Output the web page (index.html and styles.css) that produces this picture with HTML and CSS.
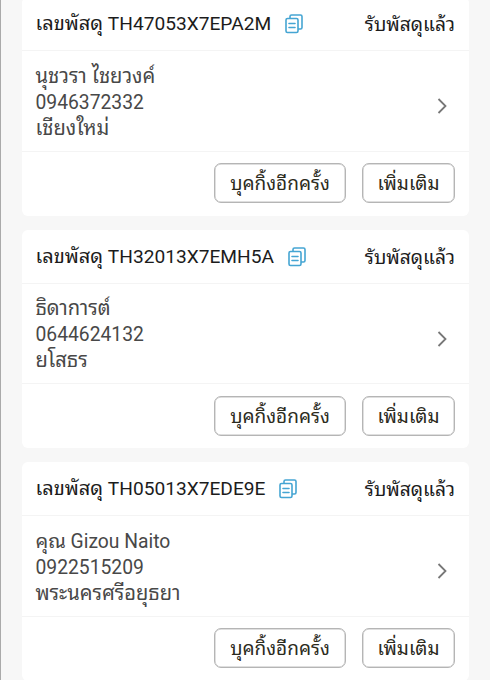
FILE: index.html
```html
<!DOCTYPE html>
<html lang="th"><head><meta charset="utf-8"><title>พัสดุ</title><link rel="stylesheet" href="styles.css"></head>
<body>
<svg class="defs" aria-hidden="true"><symbol id="copy" viewBox="0 0 18 20"><path d="M5 4.200V2.500Q5 1 6.500 1H15.500Q17 1 17 2.500V13.500Q17 15 15.500 15H13.200M2.500 4.500H11.500Q13 4.500 13 6V17Q13 18.500 11.500 18.500H2.500Q1 18.500 1 17V6Q1 4.500 2.500 4.500ZM4 9.500H10M4 13.500H10"/></symbol><symbol id="chev" viewBox="0 0 10 16"><path d="M1.500 1 8.500 8 1.500 15"/></symbol></svg>
<main class="list">
<article class="card"><header class="head"><h2 class="track"><span class="th">เลขพัสดุ</span> TH47053X7EPA2M</h2><svg class="copy"><use href="#copy"/></svg><span class="status">รับพัสดุแล้ว</span></header><section class="body"><div class="info"><p class="th">นุชวรา ไชยวงค์</p><p>0946372332</p><p class="th">เชียงใหม่</p></div><svg class="chev"><use href="#chev"/></svg></section><footer class="actions"><button class="btn wide">บุคกิ้งอีกครั้ง</button><button class="btn">เพิ่มเติม</button></footer></article>
<article class="card"><header class="head"><h2 class="track"><span class="th">เลขพัสดุ</span> TH32013X7EMH5A</h2><svg class="copy"><use href="#copy"/></svg><span class="status">รับพัสดุแล้ว</span></header><section class="body"><div class="info"><p class="th">ธิดาการต์</p><p>0644624132</p><p class="th">ยโสธร</p></div><svg class="chev"><use href="#chev"/></svg></section><footer class="actions"><button class="btn wide">บุคกิ้งอีกครั้ง</button><button class="btn">เพิ่มเติม</button></footer></article>
<article class="card"><header class="head"><h2 class="track"><span class="th">เลขพัสดุ</span> TH05013X7EDE9E</h2><svg class="copy"><use href="#copy"/></svg><span class="status">รับพัสดุแล้ว</span></header><section class="body"><div class="info"><p><span class="th">คุณ</span> Gizou Naito</p><p>0922515209</p><p class="th">พระนครศรีอยุธยา</p></div><svg class="chev"><use href="#chev"/></svg></section><footer class="actions"><button class="btn wide">บุคกิ้งอีกครั้ง</button><button class="btn">เพิ่มเติม</button></footer></article>
</main></body></html>
```
FILE: styles.css
```css
* { box-sizing: border-box; }
body { margin: 0; height: 680px; overflow: hidden; background: #f7f7f7; font-family: Roboto, "Noto Sans Thai Looped", "Noto Sans Thai", sans-serif; color: #1c1c1c; }
.defs { position: absolute; width: 0; height: 0; }
.list { height: 680px; overflow: hidden; border-left: 1px solid #aaa; padding: 0 21px; display: flex; flex-direction: column; gap: 14px; }
.card { height: 218.6px; flex: none; background: #fff; border-radius: 6px; }
.card:first-child { margin-top: -3px; }
.head { height: 54px; padding: 1px 14px 0 13.5px; display: flex; align-items: center; border-bottom: 1px solid #f4f4f4; }
.track { margin: 0; font-size: 19.15px; line-height: 26px; font-weight: 400; white-space: nowrap; }
.th { font-size: 20px; }
.track .th, .info span { line-height: 1px; }
.copy { width: 18px; height: 20px; margin-left: 14px; fill: none; stroke: #45a5d3; stroke-width: 1.6; stroke-linecap: round; stroke-linejoin: round; }
.status { margin-left: auto; padding-top: 2px; font-size: 19.2px; line-height: 26px; white-space: nowrap; }
.body { height: 100.5px; padding: 11px 22px 0 13.5px; display: flex; align-items: center; justify-content: space-between; border-bottom: 1px solid #f4f4f4; }
.info { margin-top: -7px; font-size: 19.3px; color: #484848; }
.info p { margin: 0; height: 26px; line-height: 26px; white-space: nowrap; }
.info p.th { font-size: 20.1px; line-height: 25px; }
.chev { width: 10px; height: 16px; fill: none; stroke: #777; stroke-width: 1.8; }
.actions { height: 63px; padding: 0 14px; display: flex; align-items: center; justify-content: flex-end; gap: 16px; }
.btn { width: 93px; height: 40px; padding: 2px 0 0; border: 1px solid #b5b5b5; box-shadow: inset 0 0 0 .5px #c0c0c0; border-radius: 7px; background: #fff; color: #2c2b1d; font: inherit; font-size: 19px; line-height: 26px; white-space: nowrap; }
.wide { width: 132px; }
```
